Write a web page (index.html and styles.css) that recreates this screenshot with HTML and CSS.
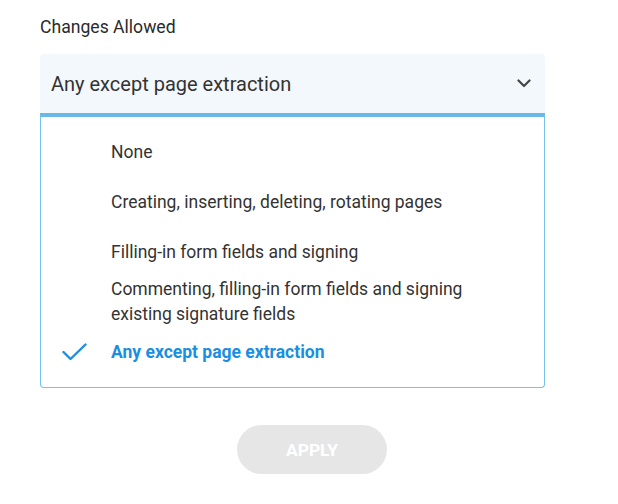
FILE: index.html
```html
<!DOCTYPE html>
<html>
<head>
<meta charset="utf-8">
<link rel="stylesheet" href="styles.css">
</head>
<body>
<div class="panel">
  <div class="label">Changes Allowed</div>
  <div class="field">
    <div class="select">
      <span class="value">Any except page extraction</span>
      <svg class="chev" width="14" height="9" viewBox="0 0 14 9"><path d="M1.5 1.5 L7 7 L12.5 1.5" fill="none" stroke="#444" stroke-width="2.2" stroke-linecap="round" stroke-linejoin="round"/></svg>
    </div>
    <ul class="menu">
      <li class="item"><span class="check"></span><span class="text">None</span></li>
      <li class="item"><span class="check"></span><span class="text">Creating, inserting, deleting, rotating pages</span></li>
      <li class="item"><span class="check"></span><span class="text">Filling-in form fields and signing</span></li>
      <li class="item"><span class="check"></span><span class="text">Commenting, filling-in form fields and signing<br>existing signature fields</span></li>
      <li class="item selected"><span class="check"><svg width="25" height="18" viewBox="0 0 25 18"><path d="M1.5 9 L8.5 16 L23.5 1.5" fill="none" stroke="#1a8ee0" stroke-width="2.4" stroke-linecap="round" stroke-linejoin="round"/></svg></span><span class="text">Any except page extraction</span></li>
    </ul>
  </div>
  <div class="actions">
    <button class="apply">APPLY</button>
  </div>
</div>
</body>
</html>
```

FILE: styles.css
```css
html, body {
  margin: 0;
  padding: 0;
  background: #ffffff;
  font-family: Roboto, "Liberation Sans", Arial, sans-serif;
  color: #333333;
}
.panel {
  width: 618px;
  height: 504px;
  padding: 17px 0 0 40px;
  box-sizing: border-box;
}
.label {
  font-size: 17.6px;
  line-height: 21px;
  color: #2a2a2a;
}
.field {
  width: 505px;
  margin-top: 16px;
}
.select {
  height: 59px;
  background: #f3f8fd;
  border-radius: 4px 4px 0 0;
  display: flex;
  align-items: center;
  justify-content: space-between;
  padding: 0 14px 0 11px;
  box-sizing: border-box;
}
.value {
  font-size: 20px;
  color: #333333;
}
.chev {
  display: block;
}
.menu {
  list-style: none;
  margin: 0;
  padding: 10px 0;
  border: 1px solid #76c0ec;
  border-top: 4px solid #6ab8e6;
  border-radius: 0 0 4px 4px;
  box-sizing: border-box;
  height: 275px;
}
.item {
  min-height: 50px;
  display: flex;
  align-items: center;
  font-size: 17.5px;
  line-height: 25px;
  color: #333333;
}
.check {
  width: 70px;
  flex: none;
  display: flex;
  justify-content: flex-start;
  padding-left: 21px;
  box-sizing: border-box;
}
.check svg {
  display: block;
}
.selected .text {
  color: #1a8ee0;
  font-weight: 700;
}
.actions {
  margin-top: 37px;
  padding-left: 197px;
}
.apply {
  width: 150px;
  height: 49px;
  border: none;
  border-radius: 25px;
  background: #e6e6e6;
  color: #ffffff;
  font-family: Roboto, "Liberation Sans", Arial, sans-serif;
  font-weight: 700;
  font-size: 17.4px;
  letter-spacing: 0;
  padding: 0;
}
```
